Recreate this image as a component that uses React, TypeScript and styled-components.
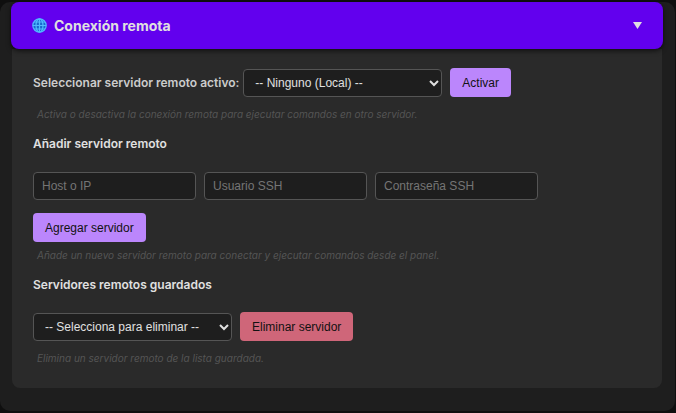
import React, { useState } from "react";
import styled, { createGlobalStyle } from "styled-components";

const GlobalStyle = createGlobalStyle`
  * { box-sizing: border-box; }
  body {
    margin: 0;
    background: #0f0f0f;
    color: #e0e0e0;
    font-family: Inter, "Liberation Sans", sans-serif;
  }
`;

const Page = styled.main`
  padding: 2px 1px 2px 0;
`;

const Card = styled.section`
  padding: 0 12px 23px 11px;
  background: #1e1e1e;
  border-radius: 10px;
`;

const Header = styled.button`
  position: relative;
  display: flex;
  align-items: center;
  gap: 7px;
  width: 100%;
  height: 47px;
  padding: 0 21px;
  border: 0;
  border-radius: 8px;
  background: #6200ee;
  box-shadow: 0 2px 5px rgba(0, 0, 0, 0.6);
  color: #e0e0e0;
  font: 700 14px/20px Inter, "Liberation Sans", sans-serif;
  text-align: left;
  cursor: pointer;
`;

const Title = styled.span`
  flex: 1;
`;

const Content = styled.div`
  margin: 0 1px;
  padding: 19px 21px 22px;
  background: #2a2a2a;
  border-radius: 0 0 8px 8px;
`;

const Row = styled.div`
  display: flex;
  flex-wrap: wrap;
  align-items: center;
  gap: 12px 8px;
`;

const Field = styled.div`
  display: flex;
  align-items: center;
  gap: 4px;
`;

const Label = styled.label`
  color: #cccccc;
  font-size: 12px;
  font-weight: 600;
  line-height: 16px;
`;

const Heading = styled.h2`
  margin: 14px 0 19px;
  font-size: 12px;
  font-weight: 600;
  line-height: 16px;
`;

const Hint = styled.p<{ $gap: number }>`
  margin: ${({ $gap }) => $gap}px 0 0 4px;
  color: #555555;
  font-size: 10px;
  font-style: italic;
  line-height: 16px;
`;

const SelectBox = styled.div`
  display: grid;
  align-items: center;
  width: 199px;

  & > * { grid-area: 1 / 1; }
  & > svg {
    justify-self: end;
    margin-right: 3px;
    pointer-events: none;
  }
`;

const Select = styled.select`
  appearance: none;
  width: 100%;
  height: 28px;
  padding: 0 20px 0 11px;
  border: 1px solid #555555;
  border-radius: 4px;
  background: #1e1e1e;
  color: #e0e0e0;
  font: 12px "Liberation Sans", Arial, sans-serif;
`;

const ServerForm = styled.form`
  display: flex;
  flex-direction: column;
  align-items: flex-start;
  gap: 13px;
  padding-top: 1px;
`;

const Input = styled.input`
  width: 163px;
  height: 28px;
  padding: 0 8px;
  border: 1px solid #555555;
  border-radius: 4px;
  background: #1e1e1e;
  color: #e0e0e0;
  font: 12px "Liberation Sans", Arial, sans-serif;

  &::placeholder { color: #757575; }
`;

const Button = styled.button<{ $danger?: boolean }>`
  height: 29px;
  padding: 0 12px;
  border: 0;
  border-radius: 4px;
  background: ${({ $danger }) => ($danger ? "#cf6679" : "#bb86fc")};
  color: #121212;
  font: 12px "Liberation Sans", Arial, sans-serif;
  cursor: pointer;
`;

const Globe = () => (
  <svg width="15" height="15" viewBox="0 0 15 15" fill="none" stroke="#50b9ff" strokeWidth="1.2" aria-hidden="true">
    <circle cx="7.5" cy="7.5" r="6.7" fill="#1769cf" />
    <ellipse cx="7.5" cy="7.5" rx="3.5" ry="6.7" />
    <path d="M7.5.8v13.4M.8 7.5h13.4M2 4h11M2 11h11" />
  </svg>
);

const Triangle = () => (
  <svg width="9" height="7" viewBox="0 0 9 7" aria-hidden="true">
    <path d="M0 0h9L4.5 7z" fill="#e0e0e0" />
  </svg>
);

const Chevron = () => (
  <svg width="10" height="8" viewBox="0 0 10 8" fill="none" stroke="#e0e0e0" strokeWidth="2" aria-hidden="true">
    <path d="M1 2l4 4 4-4" />
  </svg>
);

export default function App() {
  const [open, setOpen] = useState(true);
  return (
    <Page>
      <GlobalStyle />
      <Card>
        <Header type="button" aria-expanded={open} onClick={() => setOpen(!open)}>
          <Globe />
          <Title>Conexión remota</Title>
          <Triangle />
        </Header>
        {open && (
          <Content>
            <Row>
              <Field>
                <Label htmlFor="active">Seleccionar servidor remoto activo:</Label>
                <SelectBox>
                  <Select id="active">
                    <option>-- Ninguno (Local) --</option>
                  </Select>
                  <Chevron />
                </SelectBox>
              </Field>
              <Button type="button">Activar</Button>
            </Row>
            <Hint $gap={9}>Activa o desactiva la conexión remota para ejecutar comandos en otro servidor.</Hint>

            <Heading>Añadir servidor remoto</Heading>
            <ServerForm onSubmit={(e) => e.preventDefault()}>
              <Row>
                <Input type="text" aria-label="Host o IP" placeholder="Host o IP" />
                <Input type="text" aria-label="Usuario SSH" placeholder="Usuario SSH" />
                <Input type="password" aria-label="Contraseña SSH" placeholder="Contraseña SSH" />
              </Row>
              <Button type="submit">Agregar servidor</Button>
            </ServerForm>
            <Hint $gap={5}>Añade un nuevo servidor remoto para conectar y ejecutar comandos desde el panel.</Hint>

            <Heading>Servidores remotos guardados</Heading>
            <Row>
              <SelectBox>
                <Select aria-label="Servidores remotos guardados">
                  <option>-- Selecciona para eliminar --</option>
                </Select>
                <Chevron />
              </SelectBox>
              <Button type="button" $danger>Eliminar servidor</Button>
            </Row>
            <Hint $gap={9}>Elimina un servidor remoto de la lista guardada.</Hint>
          </Content>
        )}
      </Card>
    </Page>
  );
}
